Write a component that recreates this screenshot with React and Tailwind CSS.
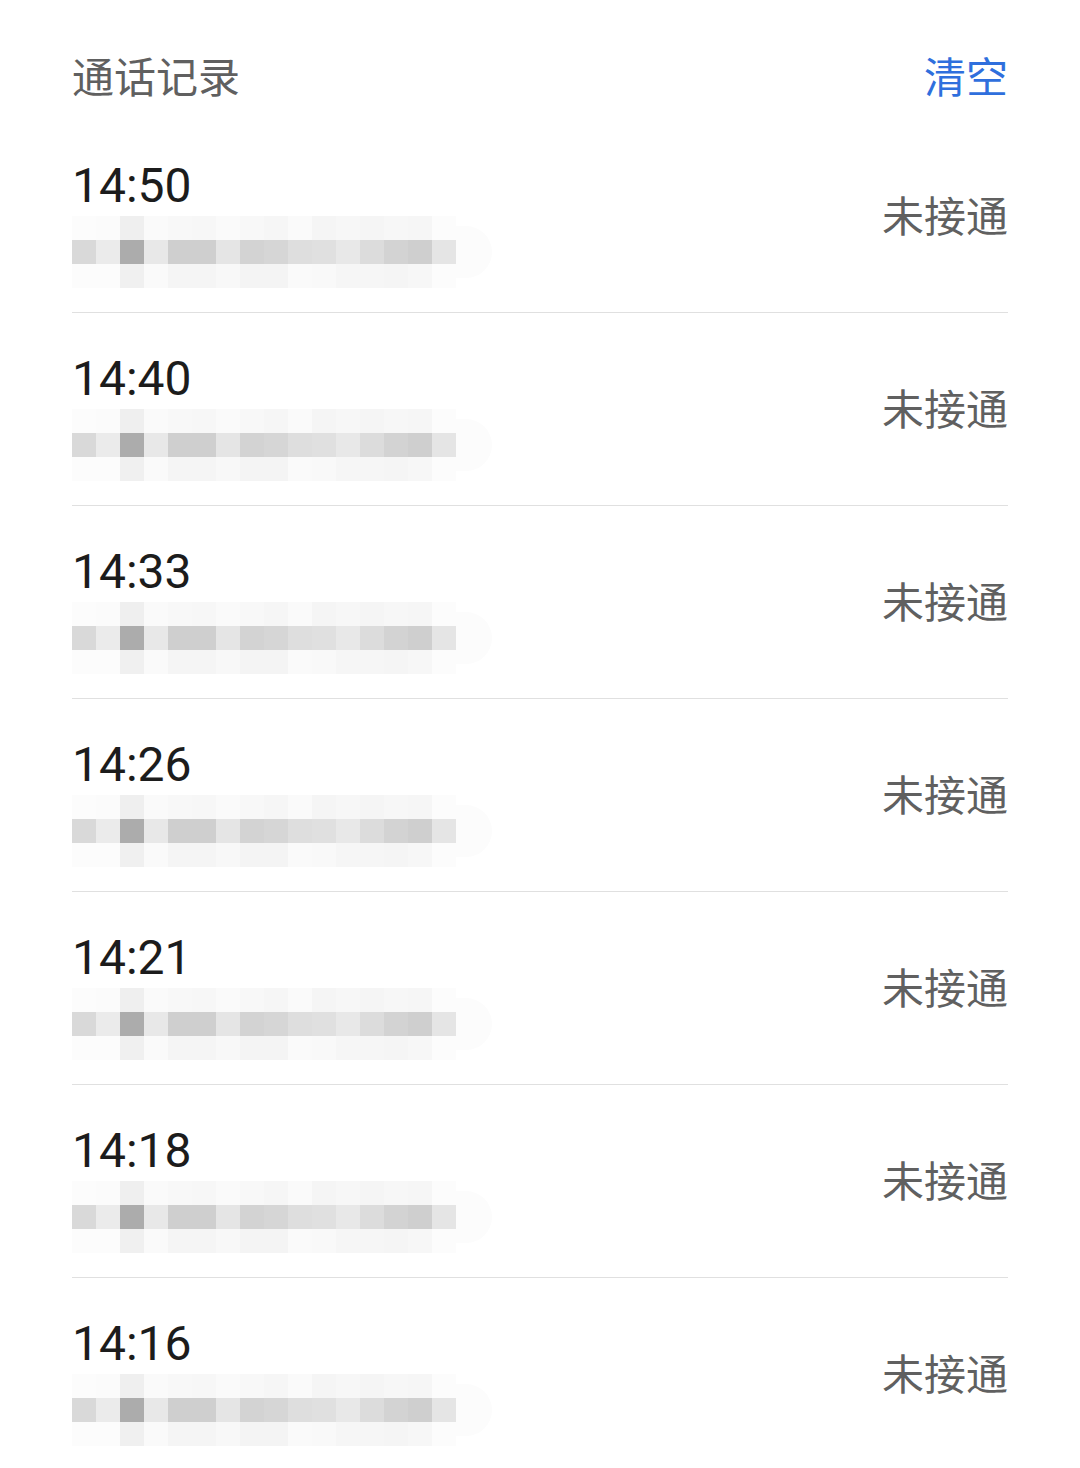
import React from 'react';

const times = ['14:50', '14:40', '14:33', '14:26', '14:21', '14:18', '14:16'];

// pixelated (mosaic) number strip, 16 blocks per band
const midBand = [
  'bg-[#d9d9d9]', 'bg-[#ebebeb]', 'bg-[#acacac]', 'bg-[#e8e8e8]',
  'bg-[#cfcfcf]', 'bg-[#cfcfcf]', 'bg-[#e5e5e5]', 'bg-[#d3d3d3]',
  'bg-[#d6d6d6]', 'bg-[#dedede]', 'bg-[#e0e0e0]', 'bg-[#e8e8e8]',
  'bg-[#dcdcdc]', 'bg-[#d3d3d3]', 'bg-[#cfcfcf]', 'bg-[#e5e5e5]',
];
const topBand = [
  'bg-[#fcfcfc]', 'bg-[#fbfbfb]', 'bg-[#efefef]', 'bg-[#fafafa]',
  'bg-[#f8f8f8]', 'bg-[#f7f7f7]', 'bg-[#fafafa]', 'bg-[#f8f8f8]',
  'bg-[#f6f6f6]', 'bg-[#fafafa]', 'bg-[#f5f5f5]', 'bg-[#f7f7f7]',
  'bg-[#f5f5f5]', 'bg-[#f7f7f7]', 'bg-[#f6f6f6]', 'bg-[#fcfcfc]',
];
const botBand = [
  'bg-[#fcfcfc]', 'bg-[#fcfcfc]', 'bg-[#f0f0f0]', 'bg-[#fafafa]',
  'bg-[#f5f5f5]', 'bg-[#f5f5f5]', 'bg-[#f8f8f8]', 'bg-[#f4f4f4]',
  'bg-[#f4f4f4]', 'bg-[#fafafa]', 'bg-[#f9f9f9]', 'bg-[#f6f6f6]',
  'bg-[#f6f6f6]', 'bg-[#f5f5f5]', 'bg-[#f7f7f7]', 'bg-[#fcfcfc]',
];

function Mosaic() {
  return (
    <div className="relative w-[420px]">
      <div className="absolute left-0 top-[10px] h-[52px] w-[420px] rounded-r-full bg-[#fcfcfc]" />
      <div className="relative flex flex-col">
        {[topBand, midBand, botBand].map((band, i) => (
          <div key={i} className="flex">
            {band.map((c, j) => (
              <div key={j} className={`h-[24px] w-[24px] ${c}`} />
            ))}
          </div>
        ))}
      </div>
    </div>
  );
}

export default function CallLog() {
  return (
    <div
      className="min-h-screen bg-white px-[72px]"
      style={{ fontFamily: 'Roboto, "Noto Sans CJK SC", sans-serif' }}
    >
      {/* Header */}
      <div className="flex h-[120px] items-start justify-between pt-[55px]">
        <h1 className="text-[42px] leading-[48px] font-normal text-[#606060]">通话记录</h1>
        <button className="text-[42px] leading-[48px] text-[#2f6fdd]">清空</button>
      </div>

      {/* Records */}
      <div>
        {times.map((t) => (
          <div
            key={t}
            className="flex h-[193px] items-start justify-between border-b border-[#e0e0e0]"
          >
            <div className="flex flex-col pt-[38px]">
              <div className="text-[48px] leading-[56px] text-[#1c1c1c]">{t}</div>
              <div className="mt-[2px]">
                <Mosaic />
              </div>
            </div>
            <div className="pt-[74px] text-[42px] leading-[48px] text-[#606060]">未接通</div>
          </div>
        ))}
      </div>
    </div>
  );
}
